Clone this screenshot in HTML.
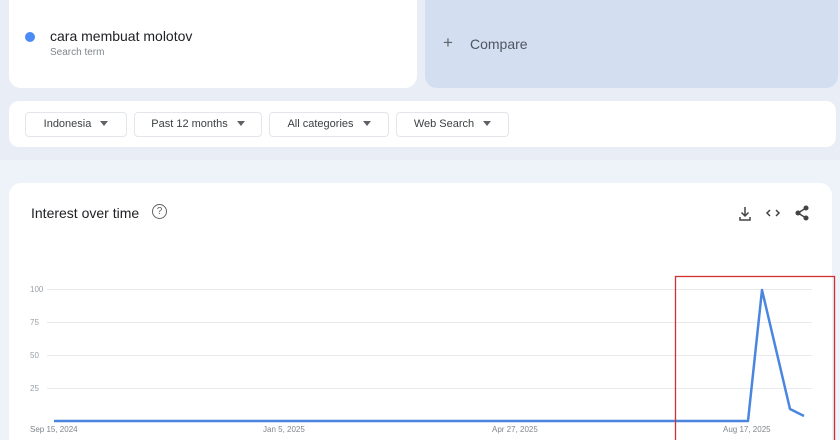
<!DOCTYPE html>
<html><head><meta charset="utf-8"><style>
*{margin:0;padding:0;box-sizing:border-box}
html,body{width:840px;height:440px;overflow:hidden}
body{background:#e8edf6;font-family:"Liberation Sans",sans-serif;position:relative}
.abs{position:absolute}
.card{background:#fff;border-radius:12px;position:absolute}
.chip{position:absolute;top:112px;height:25px;border:1px solid #e3e6ea;border-radius:4px;font-size:11px;color:#3c4043;line-height:23px;text-align:center;background:#fff}
.chip:after{content:"";display:inline-block;margin-left:9px;border-left:4px solid transparent;border-right:4px solid transparent;border-top:5px solid #5f6368;vertical-align:1px}
.yl{position:absolute;font-size:8px;color:#9aa0a6;left:30px}
.xl{position:absolute;font-size:8px;color:#80868b;top:425px}
.g{position:absolute;left:47px;width:765px;height:1px;background:#e8eaed}
</style></head><body>
<div class="abs" style="left:0;top:160px;width:840px;height:280px;background:#eef2f9"></div>
<div class="card" style="left:9px;top:-12px;width:408px;height:100px"></div>
<div class="abs" style="left:25px;top:32px;width:10px;height:10px;border-radius:50%;background:#4c8bf5"></div>
<div class="abs" style="left:50px;top:28px;font-size:14px;color:#202124">cara membuat molotov</div>
<div class="abs" style="left:50px;top:47px;font-size:10px;color:#80868b">Search term</div>
<div class="abs" style="left:425px;top:-12px;width:413px;height:100px;border-radius:12px;background:#d3dff0"></div>
<div class="abs" style="left:443px;top:33px;font-size:17px;color:#5f6368">+</div>
<div class="abs" style="left:470px;top:36px;font-size:14px;color:#4f5560">Compare</div>
<div class="card" style="left:9px;top:101px;width:827px;height:46px;border-radius:10px"></div>
<div class="chip" style="left:25px;width:102px">Indonesia</div>
<div class="chip" style="left:134px;width:128px">Past 12 months</div>
<div class="chip" style="left:269px;width:120px">All categories</div>
<div class="chip" style="left:396px;width:113px">Web Search</div>
<div class="card" style="left:9px;top:183px;width:823px;height:257px;border-radius:12px 12px 0 0"></div>
<div class="abs" style="left:31px;top:205px;font-size:14px;color:#202124">Interest over time</div>
<div class="abs" style="left:152px;top:204px;width:15px;height:15px;border:1.3px solid #5f6368;border-radius:50%;font-size:10px;color:#5f6368;text-align:center;line-height:13px">?</div>
<svg class="abs" style="left:735px;top:202px" width="80" height="22" viewBox="0 0 80 22">
<g fill="none" stroke="#444" stroke-width="1.5">
<path d="M10 5v9M6.5 10.5l3.5 3.5 3.5-3.5M5 15v3h10v-3"/>
<path d="M35 8l-3 3 3 3M41 8l3 3-3 3"/>
<circle cx="71" cy="6" r="1.8" fill="#444"/><circle cx="63" cy="11" r="1.8" fill="#444"/><circle cx="71" cy="16" r="1.8" fill="#444"/>
<path d="M71 6L63 11L71 16"/></g></svg>
<div class="g" style="top:289px"></div><div class="g" style="top:322px"></div><div class="g" style="top:355px"></div><div class="g" style="top:388px"></div>
<div class="yl" style="top:285px">100</div><div class="yl" style="top:318px">75</div><div class="yl" style="top:351px">50</div><div class="yl" style="top:384px">25</div>
<div class="xl" style="left:30px">Sep 15, 2024</div><div class="xl" style="left:263px">Jan 5, 2025</div><div class="xl" style="left:492px">Apr 27, 2025</div><div class="xl" style="left:723px">Aug 17, 2025</div>
<svg class="abs" style="left:0;top:0" width="840" height="440"><polyline points="54,421 748,421 762,290 790,409 804,416" fill="none" stroke="#4a86e0" stroke-width="2.5" stroke-linejoin="round"/>
<rect x="675.5" y="276.5" width="159" height="170" fill="none" stroke="#d0302f" stroke-width="1.3"/></svg>
</body></html>
